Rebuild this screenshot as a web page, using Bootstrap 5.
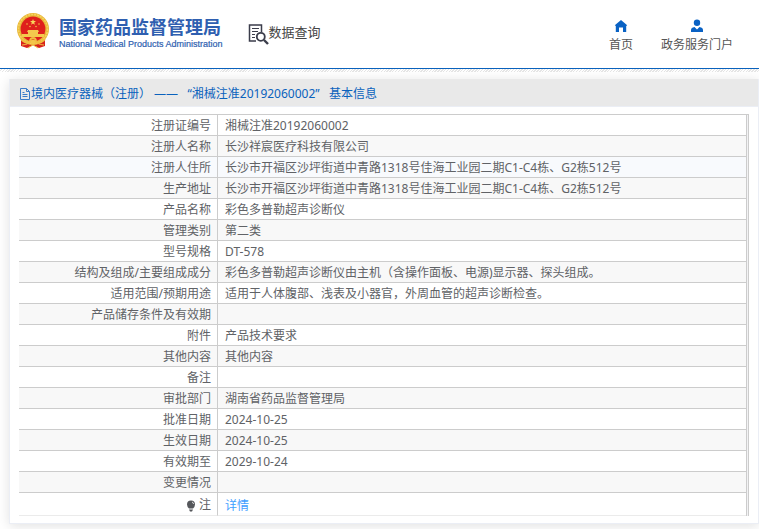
<!DOCTYPE html>
<html lang="zh-CN">
<head>
<meta charset="utf-8">
<meta name="viewport" content="width=device-width, initial-scale=1">
<title>数据查询</title>
<link rel="stylesheet" href="https://cdn.jsdelivr.net/npm/bootstrap@5.3.0/dist/css/bootstrap.min.css">
<style>
body{font-family:"Noto Sans","Noto Sans CJK SC",sans-serif;font-size:12px;line-height:20px;color:#606266;background:#fff}
.site-head{height:69px;border-bottom:1px solid #0a62bd;padding:12px 26px 0 16px}
.brand-cn{font-family:"Noto Sans CJK SC",sans-serif;font-size:18px;font-weight:700;line-height:24px;color:#2f5fb0}
.brand-en{font-family:"Liberation Sans",sans-serif;font-size:9px;line-height:12px;color:#2f5fb0;-webkit-text-stroke:.2px #2f5fb0}
.brand-text{margin-left:9px;padding-top:2px}
.query-link{margin-left:25px;padding-top:8px;color:#444}
.query-link span{font-family:"Noto Sans CJK SC",sans-serif;font-size:13px;line-height:24px;color:#444}
.top-link{color:#555;line-height:16px}
.top-nav{gap:28px;padding-top:7px}
.hatch{height:3px;background:repeating-linear-gradient(135deg,#fff 0 1px,#e6e6e6 1px 2px)}
.panel{margin:7px 0 5px 9px;border:1px solid #ebeef5;border-top:0;box-shadow:0 2px 12px rgba(0,0,0,.12)}
.panel-title{background:#e9e9e9;height:28px;padding:2px 9px 0;font-size:12px;line-height:26px;color:#0a62bd;border-bottom:1px solid #ebeef5}
.info-wrap{margin:7px 9px 7px 9px;border-right:1px solid #ccc;padding-right:1px;background:linear-gradient(#ccc,#ccc) top/100% 1px no-repeat,#f2f2f4}
.info{border-collapse:separate;border-spacing:0;border-right:1px solid #ccc;border-top:1px solid #ccc;background:#fff;table-layout:fixed}
.info th,.info td{height:21px;padding:2px 6px 0;line-height:18px;font-weight:400;border-bottom:1px solid #ccc}
.info th{width:199px;text-align:right;border-right:1px solid #ccc}
.info td{padding-left:7px}
.info tr:nth-child(even)>*{background:#f8f8f8}
.info tr:nth-child(3)>*{background:#f8fafd}
.info tr:last-child>*{height:23px;border-bottom-color:#ebebeb}
.info tr:last-child>td{padding-top:4px}
.detail-link{color:#409eff}
</style>
<script src="https://cdn.jsdelivr.net/npm/bootstrap@5.3.0/dist/js/bootstrap.bundle.min.js"></script>
</head>
<body>
<header class="site-head d-flex align-items-start">
  <a href="#" class="d-flex text-decoration-none">
    <svg width="34" height="38" viewBox="0 0 34 38" aria-hidden="true">
      <path d="M5 26 5 34 11 36 17 33 23 36 29 34 29 26Z" fill="#d8231c"/>
      <circle cx="17" cy="17" r="16" fill="#e9b83a"/>
      <circle cx="17" cy="17" r="14.5" fill="none" stroke="#f6d35e" stroke-width="1.5" stroke-dasharray="2 1"/>
      <circle cx="17" cy="17" r="12.4" fill="#df1f1c"/>
      <path d="m17 7 .8 2.100h2.200l-1.800 1.400.7 2.200-1.900-1.300-1.900 1.300.7-2.200-1.800-1.400h2.200Z" fill="#f8d65c"/>
      <g fill="#f3bd45"><circle cx="11" cy="12" r=".8"/><circle cx="23" cy="12" r=".8"/><circle cx="14" cy="14.500" r=".8"/><circle cx="20" cy="14.500" r=".8"/></g>
      <path d="M12 18h10l1 2h-1v2h6v3H6v-3h6v-2h-1Z" fill="#f4c94d"/>
      <path d="M5 27q5 5 9 3 0-4 3-4t3 4q4 2 9-3" fill="none" stroke="#f0bd3f" stroke-width="2"/>
      <circle cx="17" cy="30" r="2.500" fill="#f3c64b"/>
      <path d="M6 33q4 0 7-2M28 33q-4 0-7-2M12 36l5-3 5 3" fill="none" stroke="#f0bd3f" stroke-width="1"/>
    </svg>
    <span class="brand-text d-flex flex-column text-nowrap">
      <span class="brand-cn">国家药品监督管理局</span>
      <span class="brand-en">National Medical Products Administration</span>
    </span>
  </a>
  <a href="#" class="query-link d-flex text-decoration-none text-nowrap">
    <svg class="mt-1" width="21" height="21" viewBox="0 0 21 21" fill="none" stroke="#3b3d4b" aria-hidden="true">
      <path d="M8 17H1.500V1h12v7" stroke-width="1.500"/>
      <path d="M4 4.500h7M4 7.500h6M4 10.500h3M4 13.500h3" stroke-width="1.200"/>
      <circle cx="12.800" cy="12.800" r="4" stroke-width="1.800"/>
      <path d="m16 16 4 4" stroke-width="2.400"/>
    </svg>
    <span>数据查询</span>
  </a>
  <nav class="top-nav d-flex ms-auto text-nowrap">
    <a href="#" class="top-link d-flex flex-column align-items-center text-decoration-none">
      <svg width="14" height="14" viewBox="0 0 14 14" fill="#0a62c4" aria-hidden="true"><path d="M7 1 .800 6.300 1.800 7V13H5V8.500h4V13h3.200V7l1-.700Z"/></svg>
      <span class="mt-1">首页</span>
    </a>
    <a href="#" class="top-link d-flex flex-column align-items-center text-decoration-none">
      <svg width="14" height="14" viewBox="0 0 14 14" fill="#0a62c4" aria-hidden="true"><circle cx="7" cy="3.700" r="3.200"/><path d="M1 13v-2q0-2.500 3.500-3L7 10.500 9.500 8q3.500.5 3.500 3v2Z"/></svg>
      <span class="mt-1">政务服务门户</span>
    </a>
  </nav>
</header>
<div class="hatch"></div>
<main class="panel">
  <h1 class="panel-title d-flex align-items-center m-0 fw-normal">
    <svg width="12" height="12" viewBox="0 0 12 12" fill="none" stroke="#3a7cc9" aria-hidden="true"><path d="M1.500.5h6l3 3v8h-9ZM7.500.5v3h3M3.500 4.500h2M3.500 6.500h5M3.500 8.500h5"/></svg>
    <span>境内医疗器械（注册） ——&nbsp;&nbsp; “湘械注准20192060002”&nbsp;&nbsp; 基本信息</span>
  </h1>
  <div class="info-wrap">
    <table class="info w-100">
      <tbody>
        <tr><th scope="row">注册证编号</th><td>湘械注准20192060002</td></tr>
        <tr><th scope="row">注册人名称</th><td>长沙祥宸医疗科技有限公司</td></tr>
        <tr><th scope="row">注册人住所</th><td>长沙市开福区沙坪街道中青路1318号佳海工业园二期C1-C4栋、G2栋512号</td></tr>
        <tr><th scope="row">生产地址</th><td>长沙市开福区沙坪街道中青路1318号佳海工业园二期C1-C4栋、G2栋512号</td></tr>
        <tr><th scope="row">产品名称</th><td>彩色多普勒超声诊断仪</td></tr>
        <tr><th scope="row">管理类别</th><td>第二类</td></tr>
        <tr><th scope="row">型号规格</th><td>DT-578</td></tr>
        <tr><th scope="row">结构及组成/主要组成成分</th><td>彩色多普勒超声诊断仪由主机（含操作面板、电源)显示器、探头组成。</td></tr>
        <tr><th scope="row">适用范围/预期用途</th><td>适用于人体腹部、浅表及小器官，外周血管的超声诊断检查。</td></tr>
        <tr><th scope="row">产品储存条件及有效期</th><td></td></tr>
        <tr><th scope="row">附件</th><td>产品技术要求</td></tr>
        <tr><th scope="row">其他内容</th><td>其他内容</td></tr>
        <tr><th scope="row">备注</th><td></td></tr>
        <tr><th scope="row">审批部门</th><td>湖南省药品监督管理局</td></tr>
        <tr><th scope="row">批准日期</th><td>2024-10-25</td></tr>
        <tr><th scope="row">生效日期</th><td>2024-10-25</td></tr>
        <tr><th scope="row">有效期至</th><td>2029-10-24</td></tr>
        <tr><th scope="row">变更情况</th><td></td></tr>
        <tr><th scope="row"><svg width="10" height="12" viewBox="0 0 10 12" aria-hidden="true"><path d="M5 .5a4 4 0 0 1 4 4Q9 6.500 7 8.500H3Q1 6.500 1 4.500a4 4 0 0 1 4-4ZM3 9.500h4L6 11.500H4Z" fill="#55575b"/><path d="M6 2q1.500.5 1.500 2" fill="none" stroke="#ddd"/></svg> 注</th><td><a href="#" class="detail-link text-decoration-none">详情</a></td></tr>
      </tbody>
    </table>
  </div>
</main>
</body>
</html>
